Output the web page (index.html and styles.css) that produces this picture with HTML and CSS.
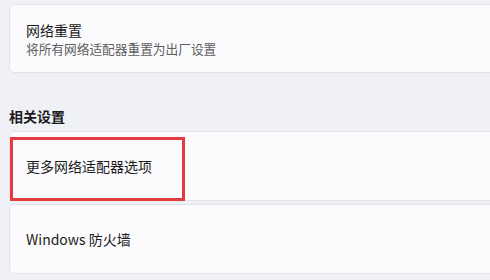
FILE: index.html
```html
<!DOCTYPE html>
<html lang="zh-CN">
<head>
<meta charset="utf-8">
<link rel="stylesheet" href="styles.css">
</head>
<body>
<div class="page">
  <div class="card card-tall">
    <div class="title">网络重置</div>
    <div class="subtitle">将所有网络适配器重置为出厂设置</div>
  </div>
  <div class="section-head">相关设置</div>
  <div class="group">
    <div class="card card-row highlighted">
      <div class="title">更多网络适配器选项</div>
      <div class="mark"></div>
    </div>
    <div class="card card-row">
      <div class="title">Windows 防火墙</div>
    </div>
  </div>
</div>
</body>
</html>
```
FILE: styles.css
```css
html, body {
  margin: 0;
  padding: 0;
  background: #eff1f6;
  overflow: hidden;
}
body {
  font-family: "Segoe UI", "Noto Sans CJK SC", "Noto Sans", sans-serif;
  color: #1b1b1b;
}
.page {
  padding: 4px 0 0 9px;
  margin-right: -20px;
}
.card {
  background: #fbfbfd;
  border: 1px solid #e3e4e8;
  border-radius: 5px;
  box-sizing: border-box;
  padding-left: 16px;
  display: flex;
  flex-direction: column;
  justify-content: center;
  position: relative;
}
.card-tall {
  height: 69px;
}
.title {
  font-size: 14px;
  line-height: 19px;
}
.subtitle {
  font-size: 12.7px;
  line-height: 17px;
  color: #5d5d5d;
}
.section-head {
  font-size: 14px;
  font-weight: 600;
  line-height: 20px;
  margin: 33px 0 0 0;
  padding-bottom: 5px;
}
.group {
  display: flex;
  flex-direction: column;
  gap: 3px;
}
.card-row {
  height: 70px;
}
.mark {
  position: absolute;
  left: 0px;
  top: 5px;
  width: 175px;
  height: 64px;
  border: 3px solid #e53b3f;
  box-sizing: border-box;
}
```
